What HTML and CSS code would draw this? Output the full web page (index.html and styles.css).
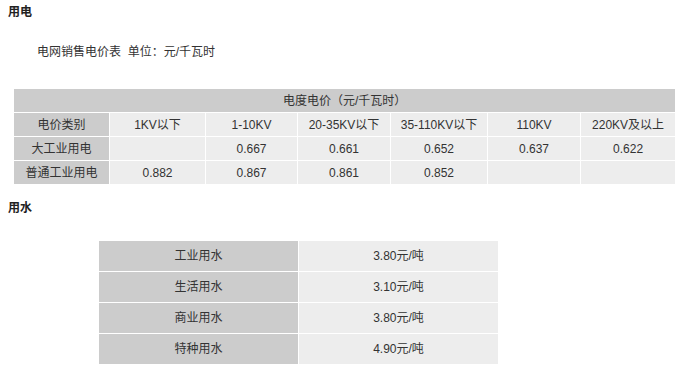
FILE: index.html
```html
<!DOCTYPE html>
<html lang="zh-CN">
<head>
<meta charset="utf-8">
<title>用电用水价格</title>
<link rel="stylesheet" href="styles.css">
</head>
<body class="page">
  <h2 class="section-title">用电</h2>
  <p class="caption">电网销售电价表&nbsp; 单位：元/千瓦时</p>
  <table class="price-table">
    <colgroup>
      <col class="c95"><col class="c95"><col class="c91"><col class="c92"><col class="c96"><col class="c92"><col class="c94">
    </colgroup>
    <tr class="head-row"><td colspan="7" class="dark">电度电价（元/千瓦时）</td></tr>
    <tr><td class="dark">电价类别</td><td>1KV以下</td><td>1-10KV</td><td>20-35KV以下</td><td>35-110KV以下</td><td>110KV</td><td>220KV及以上</td></tr>
    <tr><td class="dark">大工业用电</td><td></td><td>0.667</td><td>0.661</td><td>0.652</td><td>0.637</td><td>0.622</td></tr>
    <tr><td class="dark">普通工业用电</td><td>0.882</td><td>0.867</td><td>0.861</td><td>0.852</td><td></td><td></td></tr>
  </table>
  <h2 class="section-title water-title">用水</h2>
  <table class="water-table">
    <tr><td class="dark">工业用水</td><td>3.80元/吨</td></tr>
    <tr><td class="dark">生活用水</td><td>3.10元/吨</td></tr>
    <tr><td class="dark">商业用水</td><td>3.80元/吨</td></tr>
    <tr><td class="dark">特种用水</td><td>4.90元/吨</td></tr>
  </table>
</body>
</html>
```

FILE: styles.css
```css
html, body {
  margin: 0;
  padding: 0;
  background: #fff;
}

.page {
  font-family: "Liberation Sans", "Noto Sans CJK SC", sans-serif;
  font-size: 12px;
  color: #333;
}

.section-title {
  margin: 4px 0 0 8px;
  font-size: 12px;
  line-height: 16px;
  font-weight: bold;
  color: #222;
}

.caption {
  margin: 24px 0 0 37px;
  line-height: 16px;
}

.price-table {
  margin: 28px 0 0 13px;
  border-collapse: separate;
  border-spacing: 1px;
  table-layout: fixed;
  width: 663px;
}

.price-table td {
  height: 23px;
  padding: 0;
  text-align: center;
  vertical-align: middle;
  background: #ededed;
  line-height: 16px;
}

.price-table td.dark,
.water-table td.dark {
  background: #cccccc;
}

.c95 { width: 95px; }
.c91 { width: 91px; }
.c92 { width: 92px; }
.c94 { width: 94px; }
.c96 { width: 96px; }

.water-title {
  margin-top: 15px;
}

.water-table {
  margin: 24px 0 0 98px;
  border-collapse: separate;
  border-spacing: 1px;
  table-layout: fixed;
  width: 401px;
}

.water-table td {
  width: 199px;
  height: 30px;
  padding: 0;
  text-align: center;
  vertical-align: middle;
  background: #ededed;
  line-height: 16px;
}
```
